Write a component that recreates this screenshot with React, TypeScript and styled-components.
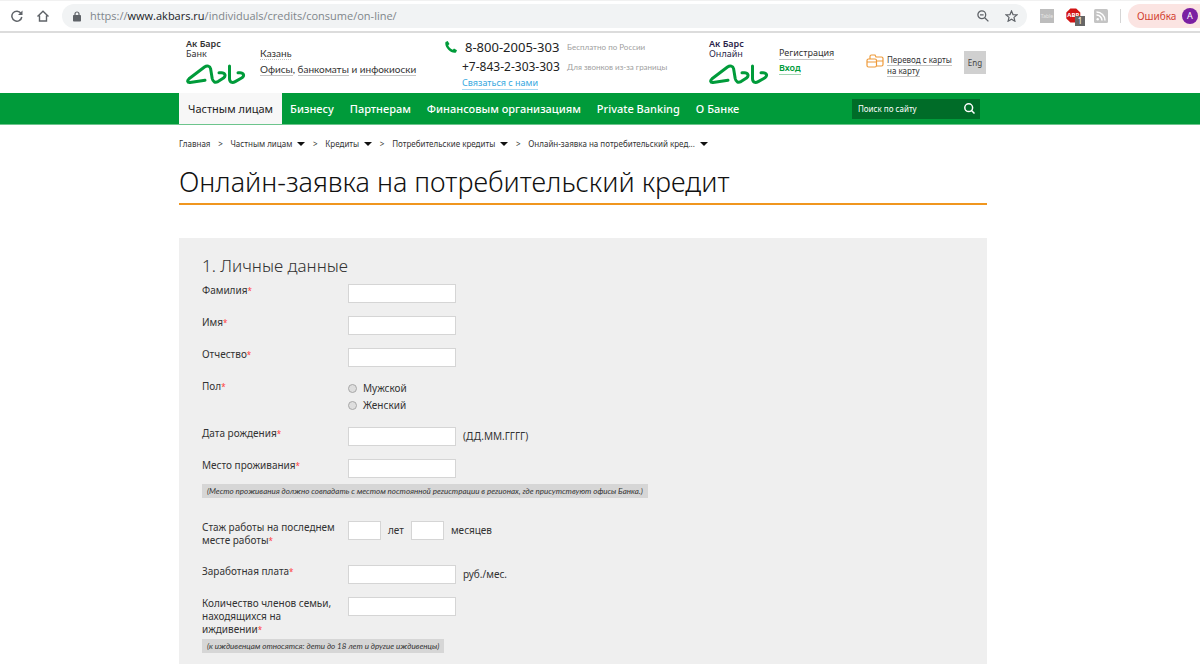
import React from "react";
import styled, { createGlobalStyle, css } from "styled-components";

const GlobalStyle = createGlobalStyle`
  * { box-sizing: border-box; }
  html, body { margin: 0; background: #fff; }
  body {
    font-family: "Noto Sans", "Open Sans", sans-serif;
    font-size: 11px;
    line-height: 13px;
    color: #333;
    overflow-x: hidden;
  }
  a { color: inherit; text-decoration: none; }
  button, input { font-family: inherit; }
`;

const green = "#009b3a";
const narrow = css`font-family: Lato, "Noto Sans", sans-serif;`;

/* Browser toolbar */

const Toolbar = styled.div`
  display: flex;
  align-items: center;
  height: 33px;
  padding-left: 8px;
  border-top: 1px solid #f1f1f1;
  border-bottom: 2px solid #dcdcdc;
  overflow: hidden;
`;

const IconButton = styled.button`
  display: flex;
  align-items: center;
  justify-content: center;
  flex: none;
  width: 18px;
  height: 18px;
  padding: 0;
  border: 0;
  background: none;
`;

const ToolbarNav = styled.div`
  display: flex;
  gap: 8px;
`;

const AddressBar = styled.div`
  display: flex;
  align-items: center;
  flex: 1;
  gap: 8px;
  height: 24px;
  margin-left: 10px;
  padding: 0 7px 0 10px;
  border-radius: 12px;
  background: #f1f3f4;
`;

const Url = styled.div`
  flex: 1;
  font-family: "Open Sans", sans-serif;
  font-size: 11px;
  line-height: 16px;
  color: #80868b;
  white-space: nowrap;
  b { font-weight: 400; color: #202124; }
`;

const AddressActions = styled.div`
  display: flex;
  gap: 10px;
`;

const Extensions = styled.div`
  display: flex;
  align-items: center;
  gap: 12px;
  margin: 0 12px 0 13px;
`;

const TableTile = styled.div`
  width: 14px;
  height: 14px;
  background: #bdbdbd;
  color: #e6e6e6;
  font-size: 5px;
  line-height: 14px;
  text-align: center;
`;

const Blocker = styled.div`
  position: relative;
  width: 16px;
  height: 16px;
`;

const BlockerCount = styled.span`
  position: absolute;
  left: 9px;
  top: 8px;
  width: 10px;
  height: 10px;
  background: #666;
  color: #fff;
  font-size: 8px;
  line-height: 10px;
  text-align: center;
`;

const ProfileChip = styled.button`
  display: flex;
  align-items: center;
  justify-content: space-between;
  width: 80px;
  height: 24px;
  margin-right: -8px;
  padding: 0 10px 0 9px;
  border: 0;
  border-radius: 12px 0 0 12px;
  background: #fbe4e2;
  color: #d23f31;
  font-size: 10px;
`;

const Avatar = styled.span`
  width: 16px;
  height: 16px;
  border-radius: 50%;
  background: #7b1fa2;
  color: #fff;
  font-size: 9px;
  line-height: 16px;
  text-align: center;
`;

const Divider = styled.div`
  width: 1px;
  height: 14px;
  margin-right: 7px;
  background: #d5d5d5;
`;

/* Site frame */

const Container = styled.div`
  padding: 0 213px 0 179px;
`;

const HeaderRow = styled.header`
  display: flex;
  height: 60px;
  padding-left: 7px;
`;

const LogoBlock = styled.a<{ $online?: boolean }>`
  display: flex;
  flex-direction: column;
  flex: none;
  width: ${(p) => (p.$online ? 70 : 74)}px;
  padding-top: 6px;
  font-size: 9px;
  line-height: 10px;
  color: ${(p) => (p.$online ? "#2b1f4a" : "#333")};
  b { font-weight: 600; }
  svg { margin-top: 5px; }
`;

const LinkBlock = styled.div<{ $width: number; $small?: boolean }>`
  ${(p) => !p.$small && narrow}
  flex: none;
  width: ${(p) => p.$width}px;
  padding-top: 12px;
  font-size: ${(p) => (p.$small ? 9 : 10)}px;
  line-height: ${(p) => (p.$small ? 15 : 16)}px;
  white-space: nowrap;
`;

const HeaderLink = styled.a<{ $tone?: "green" | "blue"; $dotted?: boolean }>`
  border-bottom: 1px ${(p) => (p.$dotted ? "dotted" : "solid")} #c4c4c4;
  ${(p) => p.$tone === "green" && css`color: ${green}; font-weight: 600; border-color: #9fd6b1;`}
  ${(p) => p.$tone === "blue" && css`color: #35a8e0; border-color: #a5d9f2;`}
`;

const Phones = styled.div`
  display: grid;
  grid-template-columns: 17px 105px 1fr;
  grid-template-rows: 20px 20px 10px;
  align-items: center;
  flex: none;
  width: 264px;
  padding-top: 4px;
  align-content: start;
  white-space: nowrap;
`;

const Phone = styled.span<{ $main?: boolean }>`
  padding-left: ${(p) => (p.$main ? 3 : 0)}px;
  font-size: ${(p) => (p.$main ? 13 : 12)}px;
  line-height: 18px;
  color: #222;
`;

const PhoneNote = styled.span`
  ${narrow}
  font-size: 8px;
  line-height: 12px;
  color: #a0a0a0;
`;

const ContactCell = styled.div`
  grid-column: 2;
  font-size: 9px;
`;

const Transfer = styled.a`
  display: flex;
  gap: 3px;
  flex: none;
  width: 98px;
  padding-top: 21px;
  font-size: 8px;
  line-height: 11px;
  white-space: nowrap;
  span { border-bottom: 1px solid #c4c4c4; }
`;

const LangButton = styled.button`
  flex: none;
  width: 22px;
  height: 23px;
  margin-top: 18px;
  padding: 0;
  border: 0;
  background: #d0d0d0;
  color: #444;
  font-size: 8px;
`;

const NavBar = styled.nav`
  background: ${green};
  border-bottom: 1px solid #6cc48c;
`;

const NavInner = styled(Container)`
  display: flex;
  align-items: center;
  height: 31px;
`;

const NavItem = styled.a<{ $active?: boolean }>`
  padding: 0 ${(p) => (p.$active ? 9 : 8)}px;
  font-size: 11px;
  line-height: 31px;
  font-weight: ${(p) => (p.$active ? 400 : 500)};
  color: ${(p) => (p.$active ? "#222" : "#fff")};
  background: ${(p) => (p.$active ? "#f7f7f7" : "none")};
  white-space: nowrap;
`;

const Search = styled.form`
  display: flex;
  align-items: center;
  width: 128px;
  height: 20px;
  margin: 0 7px 0 auto;
  padding: 0 2px 0 6px;
  background: #006c28;
`;

const SearchInput = styled.input`
  flex: 1;
  min-width: 0;
  padding: 0;
  border: 0;
  background: none;
  color: #fff;
  font-size: 8px;
  &::placeholder { color: #fff; opacity: 1; }
`;

/* Page content */

const Breadcrumbs = styled.nav`
  display: flex;
  align-items: center;
  height: 37px;
  font-size: 8px;
  line-height: 12px;
  color: #333;
  white-space: nowrap;
`;

const Crumb = styled.a`
  display: flex;
  align-items: center;
  gap: 5px;
`;

const CrumbSeparator = styled.span`
  width: 20px;
  text-align: center;
`;

const Caret = styled.span`
  border: 4px solid transparent;
  border-top-color: #111;
  border-bottom: 0;
`;

const PageTitle = styled.h1`
  margin: 0 0 33px;
  padding-bottom: 1px;
  border-bottom: 2px solid #f0961f;
  font-size: 27px;
  line-height: 40px;
  font-weight: 300;
  color: #111;
`;

const Panel = styled.form`
  padding: 18px 24px 20px 23px;
  background: #efefef;
  color: #333;
`;

const SectionTitle = styled.h2`
  margin: 0 0 8px;
  font-size: 17px;
  line-height: 20px;
  font-weight: 300;
`;

const Row = styled.div<{ $gap?: number }>`
  display: flex;
  align-items: flex-start;
  margin-bottom: ${(p) => p.$gap ?? 13}px;
`;

const labelBox = css`
  flex: none;
  width: 146px;
  padding-right: 8px;
  font-size: 10px;
  line-height: 13px;
`;

const FieldLabel = styled.label`${labelBox}`;
const GroupLabel = styled.div`${labelBox}`;

const Required = styled.span`
  font-size: 8px;
  line-height: 8px;
  color: #ff3b3b;
`;

const Field = styled.div`
  display: flex;
  align-items: center;
  gap: 7px;
  font-size: 10px;
`;

const TextInput = styled.input<{ $short?: boolean }>`
  width: ${(p) => (p.$short ? 33 : 108)}px;
  height: 19px;
  padding: 0 4px;
  border: 1px solid #d5d5d5;
  background: #fff;
  font-size: 10px;
`;

const Suffix = styled.label`
  white-space: nowrap;
`;

const Radios = styled.div`
  display: flex;
  flex-direction: column;
`;

const RadioLabel = styled.label`
  display: flex;
  align-items: center;
  gap: 6px;
  height: 17px;
  font-size: 10px;
`;

const Radio = styled.input`
  appearance: none;
  width: 9px;
  height: 9px;
  margin: 0;
  border: 1px solid #a8a8a8;
  border-radius: 50%;
  background: #dedede;
  &:checked { background: #555; }
`;

const Note = styled.div`
  ${narrow}
  width: fit-content;
  margin-bottom: 23px;
  padding: 0 5px;
  background: #d6d6d6;
  font-size: 8px;
  line-height: 14px;
  font-style: italic;
  white-space: nowrap;
`;

const AbbMark = () => (
  <svg width="60" height="21" viewBox="0 0 60 21" fill="none" stroke={green} strokeWidth="3" strokeLinecap="round" strokeLinejoin="round" aria-hidden="true">
    <path d="M19 16.200 4 18.600C1.200 18.800 1 16.600 3 14.800L18.500 3C21 1.300 24 1.800 24.600 4.800L26.200 14.500C27 18 29 19 32 17.600L37.500 14C40.300 11.600 39 8.800 35.500 8.800H33" />
    <path d="M43.500 2V14.500C43.500 18.300 46.200 19.300 49.200 17.600L56 13.800C58.900 11.500 57.500 8.800 54 8.800H52" />
  </svg>
);

const crumbs = ["Частным лицам", "Кредиты", "Потребительские кредиты", "Онлайн-заявка на потребительский кред..."];
const sections = ["Частным лицам", "Бизнесу", "Партнерам", "Финансовым организациям", "Private Banking", "О Банке"];

type TextRowProps = { id: string; label: string; suffix?: string; gap?: number };

const TextRow = ({ id, label, suffix, gap }: TextRowProps) => (
  <Row $gap={gap}>
    <FieldLabel htmlFor={id}>{label}<Required>*</Required></FieldLabel>
    <Field>
      <TextInput id={id} type="text" />
      {suffix && <Suffix htmlFor={id}>{suffix}</Suffix>}
    </Field>
  </Row>
);

export default function App() {
  return (
    <>
      <GlobalStyle />
      <Toolbar>
        <ToolbarNav>
          <IconButton aria-label="Обновить">
            <svg width="12" height="12" viewBox="0 0 12 12" fill="none" stroke="#5f6368" strokeWidth="1.5">
              <path d="M10 3.300A5 5 0 1 0 10.800 7" /><path d="M11.500 0.500V5H7z" fill="#5f6368" stroke="none" />
            </svg>
          </IconButton>
          <IconButton aria-label="Домой">
            <svg width="12" height="12" viewBox="0 0 12 12" fill="none" stroke="#5f6368" strokeWidth="1.400">
              <path d="M0.500 6.500 6 1.200 11.500 6.500M2.500 5.500V11H9.500V5.500" />
            </svg>
          </IconButton>
        </ToolbarNav>
        <AddressBar>
          <svg width="10" height="11" viewBox="0 0 10 11" aria-hidden="true">
            <rect x="1" y="4" width="8" height="6.500" rx="0.800" fill="#5f6368" />
            <path d="M3 4.500V3a2 2 0 0 1 4 0v1.500" fill="none" stroke="#5f6368" strokeWidth="1.200" />
          </svg>
          <Url>https://<b>www.akbars.ru</b>/individuals/credits/consume/on-line/</Url>
          <AddressActions>
            <IconButton aria-label="Масштаб">
              <svg width="12" height="12" viewBox="0 0 12 12" fill="none" stroke="#5f6368" strokeWidth="1.300">
                <circle cx="4.800" cy="4.800" r="3.900" /><path d="M7.700 7.700 11.400 11.400M3 4.800H6.600" />
              </svg>
            </IconButton>
            <IconButton aria-label="В закладки">
              <svg width="13" height="12" viewBox="0 0 13 12" fill="none" stroke="#5f6368" strokeWidth="1.200">
                <path d="M6.500 1 8 4.600 12 4.900 9 7.400 9.900 11.200 6.500 9.200 3.100 11.200 4 7.400 1 4.900 5 4.600z" />
              </svg>
            </IconButton>
          </AddressActions>
        </AddressBar>
        <Extensions>
          <TableTile>Table</TableTile>
          <Blocker>
            <svg width="15" height="15" viewBox="0 0 15 15" aria-hidden="true">
              <path d="M4.400 0.500H10.200L14.300 4.600V10.400L10.200 14.500H4.400L0.300 10.400V4.600z" fill="#d21414" />
              <text x="7.300" y="9" fontSize="6" fontWeight="700" fill="#fff" textAnchor="middle">ABP</text>
            </svg>
            <BlockerCount>1</BlockerCount>
          </Blocker>
          <svg width="14" height="14" viewBox="0 0 14 14" fill="none" stroke="#fff" strokeWidth="1.500" aria-hidden="true">
            <rect width="14" height="14" rx="1.500" fill="#c4c4c4" stroke="none" />
            <circle cx="3.700" cy="10.300" r="1.200" fill="#fff" stroke="none" />
            <path d="M2.500 6A5.500 5.500 0 0 1 8 11.500M2.500 3A8.500 8.500 0 0 1 11 11.500" />
          </svg>
        </Extensions>
        <Divider />
        <ProfileChip>Ошибка<Avatar>A</Avatar></ProfileChip>
      </Toolbar>

      <Container>
        <HeaderRow>
          <LogoBlock href="#"><b>Ак Барс</b>Банк<AbbMark /></LogoBlock>
          <LinkBlock $width={185}>
            <HeaderLink href="#" $dotted>Казань</HeaderLink><br />
            <HeaderLink href="#">Офисы</HeaderLink>, <HeaderLink href="#">банкоматы</HeaderLink> и <HeaderLink href="#">инфокиоски</HeaderLink>
          </LinkBlock>
          <Phones>
            <svg width="12" height="12" viewBox="0 0 12 12" aria-hidden="true">
              <path d="M0.500 1 2.700 0 4.500 3 3.200 4.200C4 6.200 5.800 8 7.800 8.800L9 7.500 12 9.300 11 11.500C6 13-1 6 0.500 1z" fill={green} />
            </svg>
            <Phone $main>8-800-2005-303</Phone>
            <PhoneNote>Бесплатно по России</PhoneNote>
            <span />
            <Phone>+7-843-2-303-303</Phone>
            <PhoneNote>Для звонков из-за границы</PhoneNote>
            <ContactCell><HeaderLink href="#" $tone="blue">Связаться с нами</HeaderLink></ContactCell>
          </Phones>
          <LogoBlock href="#" $online><b>Ак Барс</b>Онлайн<AbbMark /></LogoBlock>
          <LinkBlock $width={87} $small>
            <HeaderLink href="#">Регистрация</HeaderLink><br />
            <HeaderLink href="#" $tone="green">Вход</HeaderLink>
          </LinkBlock>
          <Transfer href="#">
            <svg width="18" height="14" viewBox="0 0 18 14" fill="none" stroke="#ee9a3a" strokeWidth="1.200" aria-hidden="true">
              <path d="M4 5V2.500Q4 1 5.500 1H9L10 3H15.500Q17 3 17 4.500V10.500Q17 12 15.500 12H11M4 5H2.500Q1 5 1 6.500V11.500Q1 13 2.500 13H9Q10.500 13 10.500 11.500V6.500Q10.500 5 9 5H4M1 8H10.500M10.500 7H17" />
            </svg>
            <div><span>Перевод с карты</span><br /><span>на карту</span></div>
          </Transfer>
          <LangButton>Eng</LangButton>
        </HeaderRow>
      </Container>

      <NavBar>
        <NavInner>
          {sections.map((name, i) => <NavItem key={name} href="#" $active={i === 0}>{name}</NavItem>)}
          <Search>
            <SearchInput type="text" aria-label="Поиск по сайту" placeholder="Поиск по сайту" />
            <IconButton type="button" aria-label="Найти">
              <svg width="11" height="11" viewBox="0 0 11 11" fill="none" stroke="#fff" strokeWidth="1.500">
                <circle cx="4.700" cy="4.700" r="3.900" /><path d="M7.500 7.500 10.500 10.500" />
              </svg>
            </IconButton>
          </Search>
        </NavInner>
      </NavBar>

      <Container as="main">
        <Breadcrumbs>
          <Crumb href="#">Главная</Crumb>
          {crumbs.map((name) => (
            <React.Fragment key={name}>
              <CrumbSeparator>&gt;</CrumbSeparator>
              <Crumb href="#">{name}<Caret /></Crumb>
            </React.Fragment>
          ))}
        </Breadcrumbs>
        <PageTitle>Онлайн-заявка на потребительский кредит</PageTitle>
        <Panel>
          <SectionTitle>1. Личные данные</SectionTitle>
          <TextRow id="surname" label="Фамилия" />
          <TextRow id="name" label="Имя" />
          <TextRow id="patronymic" label="Отчество" />
          <Row role="radiogroup" aria-labelledby="sex">
            <GroupLabel id="sex">Пол<Required>*</Required></GroupLabel>
            <Radios>
              <RadioLabel><Radio type="radio" name="sex" />Мужской</RadioLabel>
              <RadioLabel><Radio type="radio" name="sex" />Женский</RadioLabel>
            </Radios>
          </Row>
          <TextRow id="birth" label="Дата рождения" suffix="(ДД.ММ.ГГГГ)" />
          <TextRow id="residence" label="Место проживания" gap={6} />
          <Note>(Место проживания должно совпадать с местом постоянной регистрации в регионах, где присутствуют офисы Банка.)</Note>
          <Row $gap={18}>
            <FieldLabel htmlFor="years">Стаж работы на последнем месте работы<Required>*</Required></FieldLabel>
            <Field>
              <TextInput id="years" type="text" $short />
              <Suffix htmlFor="years">лет</Suffix>
              <TextInput id="months" type="text" $short />
              <Suffix htmlFor="months">месяцев</Suffix>
            </Field>
          </Row>
          <TextRow id="salary" label="Заработная плата" suffix="руб./мес." />
          <TextRow id="family" label="Количество членов семьи, находящихся на иждивении" gap={3} />
          <Note>(к иждивенцам относятся: дети до 18 лет и другие иждивенцы)</Note>
        </Panel>
      </Container>
    </>
  );
}
